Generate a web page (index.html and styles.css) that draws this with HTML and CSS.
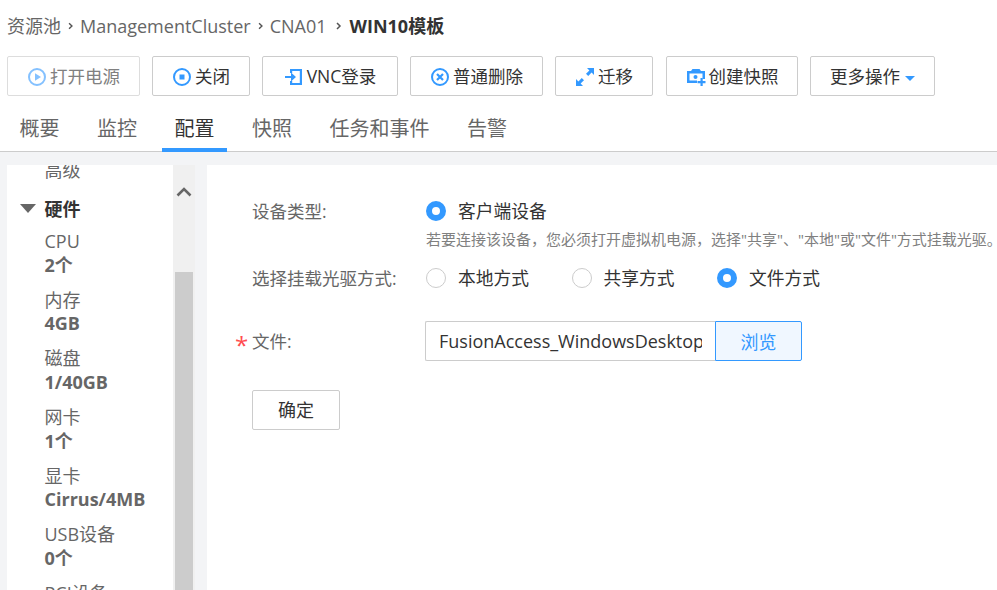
FILE: index.html
```html
<!DOCTYPE html>
<html lang="zh-CN">
<head>
<meta charset="utf-8">
<title>WIN10模板</title>
<link rel="stylesheet" href="styles.css">
</head>
<body>
<div class="page">
  <nav class="crumbs">
    <span>资源池</span><svg class="sep" viewBox="0 0 20 10"><path d="M8.500 2 11.500 5 8.500 8" fill="none" stroke="#555" stroke-width="1.500"/></svg><span>ManagementCluster</span><svg class="sep" viewBox="0 0 20 10"><path d="M8.500 2 11.500 5 8.500 8" fill="none" stroke="#555" stroke-width="1.500"/></svg><span>CNA01</span><svg class="sep last" viewBox="0 0 20 10"><path d="M8.500 2 11.500 5 8.500 8" fill="none" stroke="#555" stroke-width="1.500"/></svg><strong>WIN10模板</strong>
  </nav>
  <div class="toolbar">
    <button class="btn b1 disabled"><svg class="ico" viewBox="0 0 20 20"><circle cx="10" cy="10" r="8" fill="none" stroke="#3399ff" stroke-width="2"/><path d="M8 6.200 14 10 8 13.800z" fill="#3399ff"/></svg>打开电源</button>
    <button class="btn b2"><svg class="ico" viewBox="0 0 20 20"><circle cx="10" cy="10" r="8" fill="none" stroke="#3399ff" stroke-width="2"/><rect x="7.500" y="7.500" width="5" height="5" fill="#3399ff"/></svg>关闭</button>
    <button class="btn b3"><svg class="ico" viewBox="0 0 20 20"><path d="M6 2h12v16H6v-4h2.200v2h7.600V4H8.200v2H6z" fill="#3399ff"/><path d="M1 9h6V5.500l5 4.500-5 4.500V11H1z" fill="#3399ff"/></svg>VNC登录</button>
    <button class="btn b4"><svg class="ico" viewBox="0 0 20 20"><circle cx="10" cy="10" r="8" fill="none" stroke="#3399ff" stroke-width="2"/><path d="M7 7l6 6M13 7l-6 6" stroke="#3399ff" stroke-width="2.200" fill="none"/></svg>普通删除</button>
    <button class="btn b5"><svg class="ico" viewBox="0 0 20 20"><path d="M12 1h7v7l-2.400-2.400-3.400 3.400-2.200-2.200 3.400-3.400zM8 19H1v-7l2.400 2.400 3.400-3.400 2.200 2.200-3.400 3.400z" fill="#3399ff"/></svg>迁移</button>
    <button class="btn b6"><svg class="ico" viewBox="0 0 20 20"><path d="M1 4h4l1.500-2h7L15 4h4v8h-2.500V6.500h-13v7H11V16H1z" fill="#3399ff"/><circle cx="9.500" cy="10" r="2" fill="#3399ff"/><path d="M14.500 11h2.200v3H19.500v2.200h-2.800V19h-2.200v-2.800h-3V14h3z" fill="#3399ff"/></svg>创建快照</button>
    <button class="btn b7">更多操作<span class="caret"></span></button>
  </div>
  <div class="tabs">
    <a class="tab">概要</a><a class="tab">监控</a><a class="tab active">配置</a><a class="tab">快照</a><a class="tab">任务和事件</a><a class="tab">告警</a>
  </div>
  <div class="body">
    <aside class="side">
      <div class="list">
        <div class="adv">高级</div>
        <div class="group"><span class="tri"></span>硬件</div>
        <div class="item"><span>CPU</span><b>2个</b></div>
        <div class="item"><span>内存</span><b>4GB</b></div>
        <div class="item"><span>磁盘</span><b>1/40GB</b></div>
        <div class="item"><span>网卡</span><b>1个</b></div>
        <div class="item"><span>显卡</span><b>Cirrus/4MB</b></div>
        <div class="item"><span>USB设备</span><b>0个</b></div>
        <div class="item"><span>PCI设备</span><b>0个</b></div>
      </div>
      <div class="scroll">
        <svg class="up" viewBox="0 0 16 10"><path d="M1.500 8.500 8 2l6.500 6.500" fill="none" stroke="#666" stroke-width="2.600"/></svg>
        <div class="thumb"></div>
      </div>
    </aside>
    <main class="panel">
      <div class="form">
        <div class="lab l1">设备类型:</div>
        <div class="val v1">
          <label class="radio on"><i></i>客户端设备</label>
          <p class="hint">若要连接该设备，您必须打开虚拟机电源，选择"共享"、"本地"或"文件"方式挂载光驱。</p>
        </div>
        <div class="lab l2">选择挂载光驱方式:</div>
        <div class="val v2">
          <label class="radio"><i></i>本地方式</label>
          <label class="radio"><i></i>共享方式</label>
          <label class="radio on"><i></i>文件方式</label>
        </div>
        <div class="lab l3"><em>*</em>文件:</div>
        <div class="val v3">
          <input class="file" type="text" value="FusionAccess_WindowsDesktop_Installer.iso" readonly>
          <button class="browse">浏览</button>
        </div>
      </div>
      <button class="btn ok">确定</button>
    </main>
  </div>
</div>
</body>
</html>
```
FILE: styles.css
```css
* { box-sizing: border-box; }
html, body { margin: 0; height: 100%; }
body {
  font-family: "Open Sans", "Noto Sans CJK SC", sans-serif;
  font-size: 18px;
  color: #333;
  background: #fff;
  overflow: hidden;
}
.page { width: 997px; height: 590px; display: flex; flex-direction: column; overflow: hidden; }

.crumbs { height: 56px; padding: 13px 0 0 7px; display: flex; align-items: flex-start; line-height: 26px; color: #666; font-size: 18px; }
.crumbs .sep { width: 19px; height: 10px; margin-top: 8px; flex: none; }
.crumbs .sep.last { width: 23px; }
.crumbs strong { color: #333; font-weight: 700; }

.toolbar { display: flex; gap: 12px; padding-left: 7px; height: 40px; }
.btn {
  height: 40px; border: 1px solid #ccc; border-radius: 2px; background: #fff;
  font: inherit; color: #333; display: inline-flex; align-items: center; justify-content: center; padding: 0; line-height: 1;
}
.toolbar .btn { font-size: 17.500px; padding-top: 1px; }
.btn.disabled { color: #808080; border-color: #ddd; }
.btn.disabled .ico { opacity: .6; }
.b1 { width: 133px; } .b2 { width: 98px; } .b3 { width: 136px; } .b4 { width: 133px; }
.b5 { width: 98px; } .b6 { width: 132px; margin-left: 1px; } .b7 { width: 125px; }
.ico { width: 20px; height: 20px; margin-right: 3px; flex: none; }
.caret { width: 0; height: 0; margin-left: 5px; margin-top: 3px; border: 5px solid transparent; border-top: 5px solid #3399ff; border-bottom: 0; }

.tabs { display: flex; height: 56px; padding: 16px 0 0 7px; border-bottom: 1px solid #ccc; }
.tab { height: 40px; padding: 0 12.500px; margin-right: 12.500px; font-size: 20px; color: #666; line-height: 34px; border-bottom: 4px solid transparent; }
.tab.active { color: #333; border-bottom-color: #3399ff; }

.body { flex: 1; min-height: 0; background: #f3f4f6; padding: 13px 0 0 7px; display: flex; gap: 12px; }
.side { width: 188px; display: flex; background: #fff; overflow: hidden; }
.list { width: 166px; padding-left: 37.500px; margin-top: -9px; color: #666; }
.adv { line-height: 28px; font-size: 18px; }
.group { position: relative; font-weight: 700; color: #333; line-height: 28px; margin-top: 11px; margin-bottom: 7px; }
.tri { position: absolute; left: -25px; top: 9px; width: 0; height: 0; border: 8px solid transparent; border-top: 9px solid #666; border-bottom: 0; }
.item { display: flex; flex-direction: column; line-height: 23.500px; margin-bottom: 11.700px; }
.item b { font-weight: 700; color: #666; }
.scroll { width: 22px; background: #f0f0f0; padding: 107px 2px 0; position: relative; flex: none; }
.up { position: absolute; left: 3px; top: 22px; width: 16px; height: 10px; }
.thumb { height: 400px; background: #ccc; }

.panel { flex: 1; background: #fff; padding: 32px 0 0 45px; position: relative; }
.form { display: grid; grid-template-columns: 173px 1fr; }
.lab { color: #666; font-size: 17.500px; line-height: 28px; position: relative; }
.lab em { position: absolute; left: -17px; top: 10px; font-style: normal; color: #ff4d4f; font-size: 24px; line-height: 28px; }
.val { min-width: 0; }
.radio { display: inline-flex; align-items: center; line-height: 28px; height: 28px; color: #333; font-size: 17.750px; }
.radio i { width: 20px; height: 20px; border-radius: 50%; border: 1px solid #ccc; margin-right: 12px; background: #fff; flex: none; }
.radio.on i { border: 6px solid #3399ff; }
.v2 { display: flex; align-items: flex-start; gap: 42.500px; height: 57px; margin-left: 1px; }
.v1 { margin-left: 1px; height: 67px; }
.hint { margin: -1px 0 0; font-size: 15px; color: #808080; line-height: 28px; white-space: nowrap; }
.l3 { padding-top: 6px; }
.v3 { display: flex; }
.file { width: 290px; height: 40px; border: 1px solid #ccc; border-right: 0; border-radius: 2px 0 0 2px; padding: 0 13px; font: inherit; color: #333; outline: none; background: #fff; }
.browse { width: 87px; height: 40px; border: 1px solid #3399ff; border-radius: 0 2px 2px 0; background: #f0f7ff; color: #3399ff; font: inherit; padding: 0; }
.ok { width: 88px; margin-top: 29px; display: flex; }
```
